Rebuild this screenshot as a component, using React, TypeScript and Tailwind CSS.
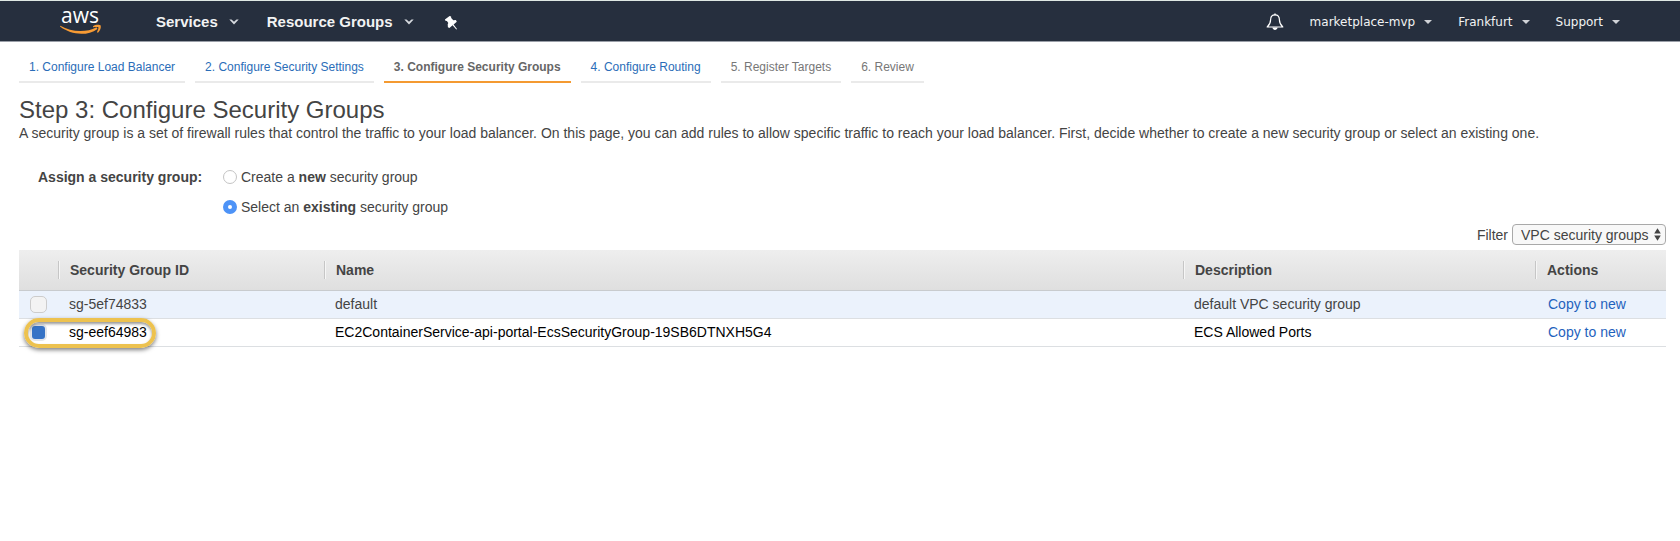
import { useState } from "react";

type Step = { label: string; state: "link" | "current" | "pending" };

const steps: Step[] = [
  { label: "1. Configure Load Balancer", state: "link" },
  { label: "2. Configure Security Settings", state: "link" },
  { label: "3. Configure Security Groups", state: "current" },
  { label: "4. Configure Routing", state: "link" },
  { label: "5. Register Targets", state: "pending" },
  { label: "6. Review", state: "pending" },
];

const groups = [
  { id: "sg-5ef74833", name: "default", description: "default VPC security group" },
  {
    id: "sg-eef64983",
    name: "EC2ContainerService-api-portal-EcsSecurityGroup-19SB6DTNXH5G4",
    description: "ECS Allowed Ports",
  },
];

function AwsLogo() {
  return (
    <svg width="44" height="36" viewBox="0 -6 44 36" className="overflow-visible" aria-label="AWS">
      <text x="1" y="13" fill="#fff" fontSize="21" fontWeight="500" fontFamily="'Open Sans', 'Noto Sans', sans-serif">
        aws
      </text>
      <path d="M.4 15.800C11 22 26 23 36.500 17.200l1 1.700C27 26.500 11 25 0 16.600z" fill="#f79b34" />
      <path d="M33 16.200c2.500-1.700 6.500-1.700 7.600-.8.800 1.500-.4 5.200-2.600 7.300l-1.100-.4c1-2.200 1.900-4.300 1.500-5-.6-.6-3.200-.3-5.400-.1z" fill="#f79b34" />
    </svg>
  );
}

function Chevron() {
  return (
    <svg width="10" height="6" viewBox="0 0 10 6" fill="#d5d9de" aria-hidden="true">
      <path d="M.3.5h2.200L5 2.800 7.500.5h2.200L5 5.600z" />
    </svg>
  );
}

function Caret() {
  return (
    <svg width="8" height="4" viewBox="0 0 8 4" fill="#d0d3d7" aria-hidden="true">
      <path d="M0 0h8L4 4z" />
    </svg>
  );
}

function Pin() {
  return (
    <svg width="14" height="15" viewBox="0 0 14 15" fill="#fff" aria-hidden="true">
      <path d="M.9 4.600L5.600.9l1.500.6.100 1.500L9.300 5.200l2.600-.1.900 1.600-3.200 2.700L13 14l-.7.500-3.700-4.300-3.200 2.900-1.500-.8-.2-3L4.300 8 2.900 5.900l-1.500-.1z" />
    </svg>
  );
}

function Bell() {
  return (
    <svg width="18" height="18" viewBox="0 0 18 18" fill="none" aria-hidden="true">
      <path
        d="M9 1.800c-3 0-4.400 2.200-4.400 5 0 3.800-1.400 5.400-3.400 7.200h15.600c-2-1.800-3.400-3.400-3.400-7.200 0-2.800-1.400-5-4.400-5z"
        stroke="#fff"
        strokeWidth="1.200"
        strokeLinejoin="round"
      />
      <path d="M6.300 14.500h5.400c-.4 1.500-1.400 2.400-2.700 2.400s-2.300-.9-2.700-2.400zM8.300.6h1.400v1.600H8.300z" fill="#fff" />
    </svg>
  );
}

function TopBar() {
  return (
    <header className="flex h-[42px] items-center justify-between border-t border-b border-t-[#dfe8e4] border-b-[#9a9fa8] bg-[#262f3e] px-[60px] pt-[2px] text-white">
      <nav className="flex items-center" aria-label="Main">
        <a href="#home" className="mr-[52px]">
          <AwsLogo />
        </a>
        <button type="button" className="mr-7 flex items-center gap-[11px] text-[15px] font-bold text-[#f2f3f3]">
          Services <Chevron />
        </button>
        <button type="button" className="mr-[30px] flex items-center gap-[11px] text-[15px] font-bold text-[#f2f3f3]">
          Resource Groups <Chevron />
        </button>
        <button type="button" aria-label="Pin shortcuts">
          <Pin />
        </button>
      </nav>
      <div className="flex items-center gap-[26px] font-['DejaVu_Sans','Noto_Sans',sans-serif] text-xs text-[#f2f3f3]">
        <button type="button" aria-label="Notifications">
          <Bell />
        </button>
        {["marketplace-mvp", "Frankfurt", "Support"].map((label) => (
          <button key={label} type="button" className="flex items-center gap-[9px]">
            {label} <Caret />
          </button>
        ))}
      </div>
    </header>
  );
}

const stepStyles = {
  link: "border-[#eaeaea] text-[#2a6db8]",
  current: "border-[#f49a31] font-bold text-[#666]",
  pending: "border-[#eaeaea] text-[#777]",
};

function StepTabs() {
  return (
    <ol className="flex gap-[10px] text-xs leading-4">
      {steps.map((step) => (
        <li key={step.label} className={`border-b-2 px-[10px] pb-[6px] ${stepStyles[step.state]}`}>
          {step.state === "link" ? <a href="#step">{step.label}</a> : step.label}
        </li>
      ))}
    </ol>
  );
}

const radioClass =
  "size-[14px] appearance-none rounded-full border border-[#c4c4c4] bg-white checked:border-[5px] checked:border-[#4d93f7]";

const thClass = "h-10 p-0 text-left font-bold";
const thInner = "flex h-[18px] items-center border-l border-[#c6c6c6] pl-[11px] shadow-[inset_1px_0_0_#f6f6f6]";

export default function App() {
  const [mode, setMode] = useState("existing");
  const [selected, setSelected] = useState("sg-eef64983");

  return (
    <div className="min-h-screen bg-white font-['Liberation_Sans',Arial,sans-serif] text-sm text-[#444]">
      <TopBar />
      <main className="pt-[17px] pr-[14px] pl-[19px]">
        <StepTabs />
        <h1 className="mt-3 text-2xl leading-[30px]">Step 3: Configure Security Groups</h1>
        <p className="leading-4">
          A security group is a set of firewall rules that control the traffic to your load balancer. On this page, you
          can add rules to allow specific traffic to reach your load balancer. First, decide whether to create a new
          security group or select an existing one.
        </p>

        <fieldset className="mt-7 flex pl-[19px] leading-4">
          <legend className="float-left w-[185px] font-bold">Assign a security group:</legend>
          <div className="flex flex-col gap-[14px]">
            <label className="flex items-center gap-1">
              <input
                type="radio"
                name="mode"
                className={radioClass}
                checked={mode === "new"}
                onChange={() => setMode("new")}
              />
              <span>
                Create a <b>new</b> security group
              </span>
            </label>
            <label className="flex items-center gap-1">
              <input
                type="radio"
                name="mode"
                className={radioClass}
                checked={mode === "existing"}
                onChange={() => setMode("existing")}
              />
              <span>
                Select an <b>existing</b> security group
              </span>
            </label>
          </div>
        </fieldset>

        <div className="mt-[9px] flex items-center justify-end gap-1">
          <label htmlFor="filter">Filter</label>
          <div className="relative">
            <select
              id="filter"
              className="block h-[21px] w-[154px] appearance-none rounded border border-[#a9a9a9] bg-[#f8f8f8] pl-2 text-sm leading-4"
            >
              <option>VPC security groups</option>
            </select>
            <svg
              className="pointer-events-none absolute top-1 right-[5px]"
              width="7"
              height="13"
              viewBox="0 0 7 13"
              fill="#444"
              aria-hidden="true"
            >
              <path d="M.2 5.500h6.600L3.500.2zM.2 7.500h6.600L3.500 12.800z" />
            </svg>
          </div>
        </div>

        <table className="mt-[5px] w-full table-fixed border-collapse">
          <thead className="bg-linear-to-b from-[#eeeeee] to-[#dfdfdf]">
            <tr className="border-b border-[#c8cbce]">
              <th className="w-[39px] p-0" aria-label="Selected" />
              <th className={`w-[266px] ${thClass}`}>
                <div className={thInner}>Security Group ID</div>
              </th>
              <th className={thClass}>
                <div className={thInner}>Name</div>
              </th>
              <th className={`w-[352px] ${thClass}`}>
                <div className={thInner}>Description</div>
              </th>
              <th className={`w-[131px] ${thClass}`}>
                <div className={thInner}>Actions</div>
              </th>
            </tr>
          </thead>
          <tbody>
            {groups.map((group) => {
              const active = selected === group.id;
              return (
                <tr
                  key={group.id}
                  className={`h-7 border-b border-[#dcdfe2] ${active ? "bg-white text-black" : "bg-[#ebf2fc]"}`}
                >
                  <td className="relative p-0 pl-[11px]">
                    <input
                      type="checkbox"
                      id={group.id}
                      className="block size-[17px] appearance-none rounded-[5px] border border-[#cccccc] bg-[#f3f3f3] checked:border-2 checked:border-[#e3e6ea] checked:bg-[#3673c6]"
                      checked={active}
                      onChange={() => setSelected(group.id)}
                    />
                    {active && (
                      <span className="pointer-events-none absolute -top-px left-[5px] h-[30px] w-[132px] rounded-full border-4 border-[#edc24f] shadow-[0_2px_4px_rgba(0,0,0,0.5),inset_0_2px_3px_rgba(0,0,0,0.4)]" />
                    )}
                  </td>
                  <td className="p-0 pl-[11px]">
                    <label htmlFor={group.id}>{group.id}</label>
                  </td>
                  <td className="p-0 pl-[11px]">{group.name}</td>
                  <td className="p-0 pl-[11px]">{group.description}</td>
                  <td className="p-0 pl-[13px]">
                    <a href="#copy" className="text-[#1f62bd]">
                      Copy to new
                    </a>
                  </td>
                </tr>
              );
            })}
          </tbody>
        </table>
      </main>
    </div>
  );
}
